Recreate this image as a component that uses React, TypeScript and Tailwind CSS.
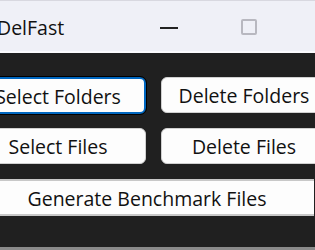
import React from "react";

const font = { fontFamily: '"Open Sans", "Noto Sans", sans-serif' };

export default function App() {
  return (
    <div className="w-[315px] h-[250px] overflow-hidden bg-[#202020] flex flex-col" style={font}>
      <div className="h-[53px] shrink-0 bg-[#eff0f7] border-t border-[#d8d8e0] border-b-2 border-b-[#fafafd] flex items-center relative">
        <span className="ml-[-3px] pt-[3px] text-[19.5px] text-[#111] leading-none">DelFast</span>
        <div className="absolute left-[160px] top-[26px] w-[18px] h-[2px] bg-[#222]" />
        <div className="absolute left-[241px] top-[18px] w-[16px] h-[16px] border-2 border-[#b8b8c0] rounded-[2px]" />
      </div>
      <div className="ml-[-30px] w-[360px] mt-[24px] grid grid-cols-[176px_166px] gap-x-[15px] gap-y-[14px]">
        <button className="h-[37px] pt-[2px] bg-[#fdfdfd] rounded-[6px] border-2 border-[#0067c0] outline outline-1 outline-black text-[19.5px] text-[#111] leading-none">
          Select Folders
        </button>
        <button className="h-[36px] pt-[2px] bg-[#fdfdfd] rounded-[6px] border border-[#d0d0d0] text-[19.5px] text-[#111] leading-none">
          Delete Folders
        </button>
        <button className="h-[36px] pt-[2px] bg-[#fdfdfd] rounded-[6px] border border-[#d0d0d0] text-[19.5px] text-[#111] leading-none">
          Select Files
        </button>
        <button className="h-[36px] pt-[2px] bg-[#fdfdfd] rounded-[6px] border border-[#d0d0d0] text-[19.5px] text-[#111] leading-none">
          Delete Files
        </button>
      </div>
      <div className="mt-[15px] ml-[-20px] w-[334px] h-[37px] pt-[2px] bg-[#fdfdfd] border-y-2 border-[#c8c8c8] flex items-center justify-center text-[19.5px] text-[#111] leading-none">
        Generate Benchmark Files
      </div>
      <div className="mt-auto h-[3px] bg-[#8a8a8a]" />
    </div>
  );
}
